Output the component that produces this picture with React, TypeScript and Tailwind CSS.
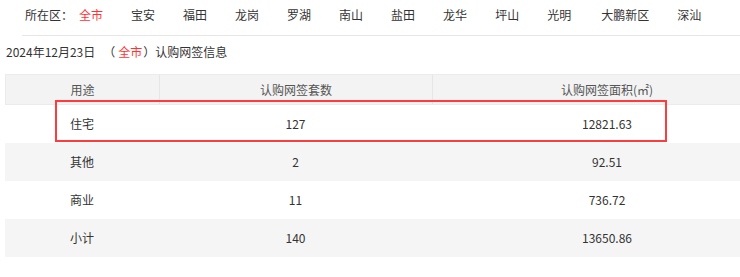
import React from "react";

const districts = ["宝安", "福田", "龙岗", "罗湖", "南山", "盐田", "龙华", "坪山", "光明", "大鹏新区", "深汕"];

const rows = [
  { use: "住宅", count: "127", area: "12821.63" },
  { use: "其他", count: "2", area: "92.51" },
  { use: "商业", count: "11", area: "736.72" },
  { use: "小计", count: "140", area: "13650.86" },
];

const font = { fontFamily: '"Noto Sans CJK SC", "Noto Sans", sans-serif' };

export default function App() {
  return (
    <div className="w-[740px] h-[277px] overflow-hidden bg-white text-[#333]" style={font}>
      <div className="ml-[22px] h-[36px] border-b border-[#e6e6e6] pt-[7px] flex text-[12px] leading-[16px] text-[#333]">
        <span className="ml-[3px] w-[54px]">所在区：</span>
        <div className="flex gap-[28px]">
          <span className="text-[#ff3333]">全市</span>
          {districts.map((d) => (
            <span key={d} className={d === "大鹏新区" ? "ml-[2px]" : ""}>{d}</span>
          ))}
        </div>
      </div>
      <div className="pl-[6px] pt-[7px] h-[38px] text-[12px] leading-[18px] text-[#333] flex">
        <span>2024年12月23日</span>
        <span className="ml-[8px]">（</span>
        <span className="text-[#ff3333] ml-[3px] mr-[1px]">全市</span>
        <span>）认购网签信息</span>
      </div>
      <div className="relative ml-[5px] w-[777px] text-[12px]">
        <div className="flex h-[31px] bg-[#f3f3f3] border border-[#ebebeb] text-[#555]">
          <div className="w-[154px] flex items-center justify-center border-r border-[#e6e6e6]">用途</div>
          <div className="w-[273px] flex items-center justify-center border-r border-[#e6e6e6]">认购网签套数</div>
          <div className="flex-1 flex items-center justify-center">认购网签面积(㎡)</div>
        </div>
        {rows.map((r, i) => (
          <div key={r.use} className={`flex h-[38px] ${i % 2 === 1 ? "bg-[#f5f5f5]" : "bg-white"}`}>
            <div className="w-[154px] flex items-center justify-center">{r.use}</div>
            <div className="w-[273px] flex items-center justify-center">{r.count}</div>
            <div className="flex-1 flex items-center justify-center">{r.area}</div>
          </div>
        ))}
        <div className="absolute left-[50px] top-[26px] w-[612px] h-[42px] border-2 border-[#ff3b3b]" />
      </div>
    </div>
  );
}
